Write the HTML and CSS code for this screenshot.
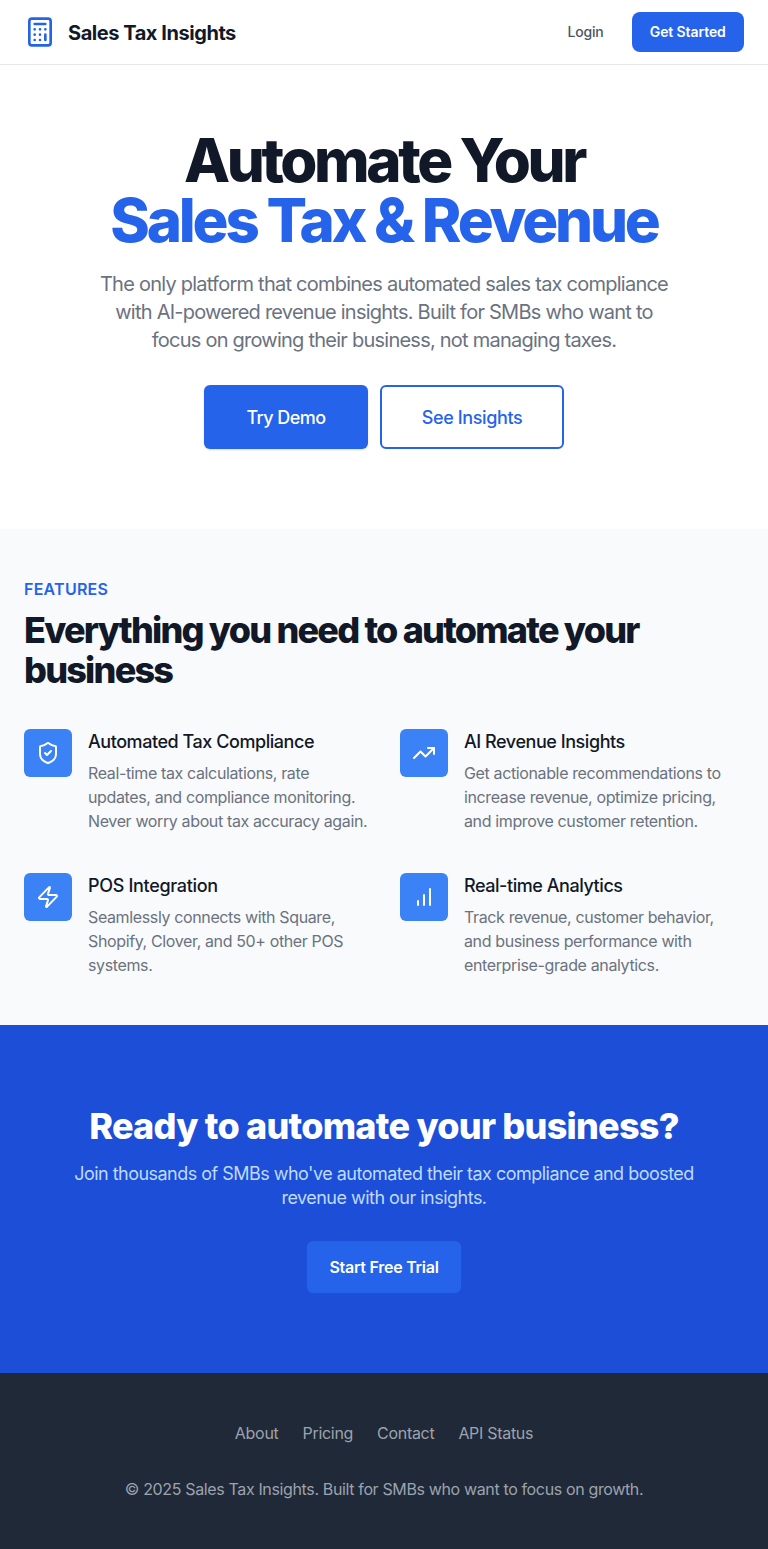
FILE: index.html
```html
<!DOCTYPE html>
<html lang="en">
<head>
<meta charset="utf-8">
<title>Sales Tax Insights</title>
<link rel="stylesheet" href="styles.css">
</head>
<body>
<header class="header">
  <div class="brand">
    <svg class="icon logo" viewBox="0 0 24 24"><rect width="16" height="20" x="4" y="2" rx="2"/><path d="M8 6h8M16 14v4M16 10h.01M12 10h.01M8 10h.01M12 14h.01M8 14h.01M12 18h.01M8 18h.01"/></svg>
    <span class="brand-name">Sales Tax Insights</span>
  </div>
  <nav class="nav"><a class="login">Login</a><a class="get-started">Get Started</a></nav>
</header>
<main>
  <section class="hero">
    <h1 class="hero-title"><span class="line lead">Automate Your</span><span class="line accent">Sales Tax &amp; Revenue</span></h1>
    <p class="hero-text"><span class="line">The only platform that combines automated sales tax compliance</span><span class="line">with AI-powered revenue insights. Built for SMBs who want to</span><span class="line">focus on growing their business, not managing taxes.</span></p>
    <div class="actions"><a class="btn primary">Try Demo</a><a class="btn outline">See Insights</a></div>
  </section>
  <section class="features">
    <p class="eyebrow">FEATURES</p>
    <h2 class="features-title"><span class="line">Everything you need to automate your</span><span class="line">business</span></h2>
    <div class="grid">
      <article class="feature">
        <div class="tile"><svg class="icon" viewBox="0 0 24 24"><path d="M20 13c0 5-3.5 7.5-7.66 8.95a1 1 0 0 1-.67-.01C7.5 20.5 4 18 4 13V6a1 1 0 0 1 1-1c2 0 4.500-1.200 6.240-2.720a1.170 1.170 0 0 1 1.520 0C14.510 3.810 17 5 19 5a1 1 0 0 1 1 1z"/><path d="m9 12 2 2 4-4"/></svg></div>
        <div><h3 class="feature-title">Automated Tax Compliance</h3><p class="feature-text"><span class="line">Real-time tax calculations, rate</span><span class="line">updates, and compliance monitoring.</span><span class="line">Never worry about tax accuracy again.</span></p></div>
      </article>
      <article class="feature">
        <div class="tile"><svg class="icon" viewBox="0 0 24 24"><path d="m22 7-8.500 8.500-5-5L2 17"/><path d="M16 7h6v6"/></svg></div>
        <div><h3 class="feature-title">AI Revenue Insights</h3><p class="feature-text"><span class="line">Get actionable recommendations to</span><span class="line">increase revenue, optimize pricing,</span><span class="line">and improve customer retention.</span></p></div>
      </article>
      <article class="feature">
        <div class="tile"><svg class="icon" viewBox="0 0 24 24"><path d="M4 14a1 1 0 0 1-.78-1.630l9.900-10.200a.5.5 0 0 1 .86.460l-1.920 6.020A1 1 0 0 0 13 10h7a1 1 0 0 1 .78 1.630l-9.900 10.200a.5.5 0 0 1-.86-.46l1.920-6.020A1 1 0 0 0 11 14z"/></svg></div>
        <div><h3 class="feature-title pos">POS Integration</h3><p class="feature-text"><span class="line">Seamlessly connects with Square,</span><span class="line">Shopify, Clover, and 50+ other POS</span><span class="line">systems.</span></p></div>
      </article>
      <article class="feature">
        <div class="tile"><svg class="icon" viewBox="0 0 24 24"><path d="M12 20V10M18 20V4M6 20v-4"/></svg></div>
        <div><h3 class="feature-title">Real-time Analytics</h3><p class="feature-text"><span class="line">Track revenue, customer behavior,</span><span class="line">and business performance with</span><span class="line">enterprise-grade analytics.</span></p></div>
      </article>
    </div>
  </section>
  <section class="cta">
    <h2 class="cta-title">Ready to automate your business?</h2>
    <p class="cta-text"><span class="line">Join thousands of SMBs who've automated their tax compliance and boosted</span><span class="line">revenue with our insights.</span></p>
    <a class="trial">Start Free Trial</a>
  </section>
</main>
<footer class="footer">
  <nav class="links"><a>About</a><a>Pricing</a><a>Contact</a><a>API Status</a></nav>
  <p class="copyright">© 2025 Sales Tax Insights. Built for SMBs who want to focus on growth.</p>
</footer>
</body>
</html>
```
FILE: styles.css
```css
* { box-sizing: border-box; }
body, h1, h2, h3, p { margin: 0; }
body { font: 400 16px/24px Inter, sans-serif; color: #111827; background: #fff; -webkit-font-smoothing: antialiased; }
.line { display: block; white-space: nowrap; }
.icon { display: block; width: 24px; height: 24px; fill: none; stroke: currentColor; stroke-width: 2; stroke-linecap: round; stroke-linejoin: round; }
.header { height: 65px; padding: 0 24px; display: flex; align-items: center; justify-content: space-between; border-bottom: 1px solid #e5e7eb; }
.brand { display: flex; align-items: center; gap: 12px; }
.logo { width: 32px; height: 32px; color: #2563eb; }
.brand-name { padding-top: 2px; font-size: 20px; line-height: 28px; font-weight: 700; letter-spacing: -0.45px; }
.nav { display: flex; align-items: center; gap: 28px; font-size: 14px; line-height: 20px; letter-spacing: -.1px; }
.login { font-weight: 500; color: #4b5563; letter-spacing: -.2px; }
.get-started { width: 112.5px; height: 40px; display: grid; place-items: center; border-radius: 8px; background: #2563eb; color: #fff; font-weight: 600; }
.hero { height: 464px; padding-top: 65px; text-align: center; }
.hero-title { font-size: 60px; line-height: 60px; font-weight: 800; letter-spacing: -3.2px; }
.lead { letter-spacing: -3.4px; }
.accent { color: #2563eb; }
.hero-text { margin-top: 20px; font-size: 20px; line-height: 28px; color: #6b7280; letter-spacing: -.76px; }
.actions { margin-top: 31px; display: flex; justify-content: center; gap: 12px; }
.btn { height: 64px; display: grid; place-items: center; border-radius: 6px; font-size: 18px; font-weight: 500; }
.primary { width: 164px; padding-top: 2px; background: #2563eb; color: #fff; letter-spacing: -.55px; box-shadow: 0 1px 2px rgba(0,0,0,.15); }
.outline { width: 184px; padding-top: 2px; border: 2px solid #2563eb; color: #2563eb; letter-spacing: -.38px; }
.features { height: 496px; padding: 48px 24px; background: #f9fafb; }
.eyebrow { font-weight: 600; color: #2563eb; letter-spacing: .25px; }
.features-title { margin-top: 9px; font-size: 36px; line-height: 40px; font-weight: 800; letter-spacing: -1.78px; }
.grid { margin-top: 39px; display: grid; grid-template-columns: repeat(2, minmax(0, 1fr)); gap: 40px 32px; }
.feature { display: grid; grid-template-columns: 48px minmax(0, 1fr); gap: 16px; height: 104px; }
.tile { width: 48px; height: 48px; display: grid; place-items: center; border-radius: 6px; background: #3b82f6; color: #fff; }
.feature-title { padding-top: 1px; font-size: 18px; line-height: 24px; font-weight: 500; letter-spacing: -.45px; }
.pos { letter-spacing: -.32px; }
.feature-text { margin-top: 7px; color: #6b7280; letter-spacing: -.37px; }
.cta { height: 348px; padding-top: 81px; display: flex; flex-direction: column; align-items: center; background: #1d4ed8; text-align: center; color: #fff; }
.cta-title { font-size: 36px; line-height: 40px; font-weight: 800; letter-spacing: -.76px; }
.cta-text { margin-top: 16px; font-size: 18px; line-height: 24px; color: #bfdbfe; letter-spacing: -.52px; }
.trial { width: 154px; height: 52px; margin-top: 31px; display: grid; place-items: center; border-radius: 6px; background: #2563eb; font-weight: 600; letter-spacing: -.26px; }
.footer { height: 176px; padding-top: 48px; background: #1f2937; color: #9ca3af; text-align: center; letter-spacing: -.3px; }
.links { display: flex; justify-content: center; gap: 24px; }
.copyright { margin-top: 32px; letter-spacing: -.36px; }
```
